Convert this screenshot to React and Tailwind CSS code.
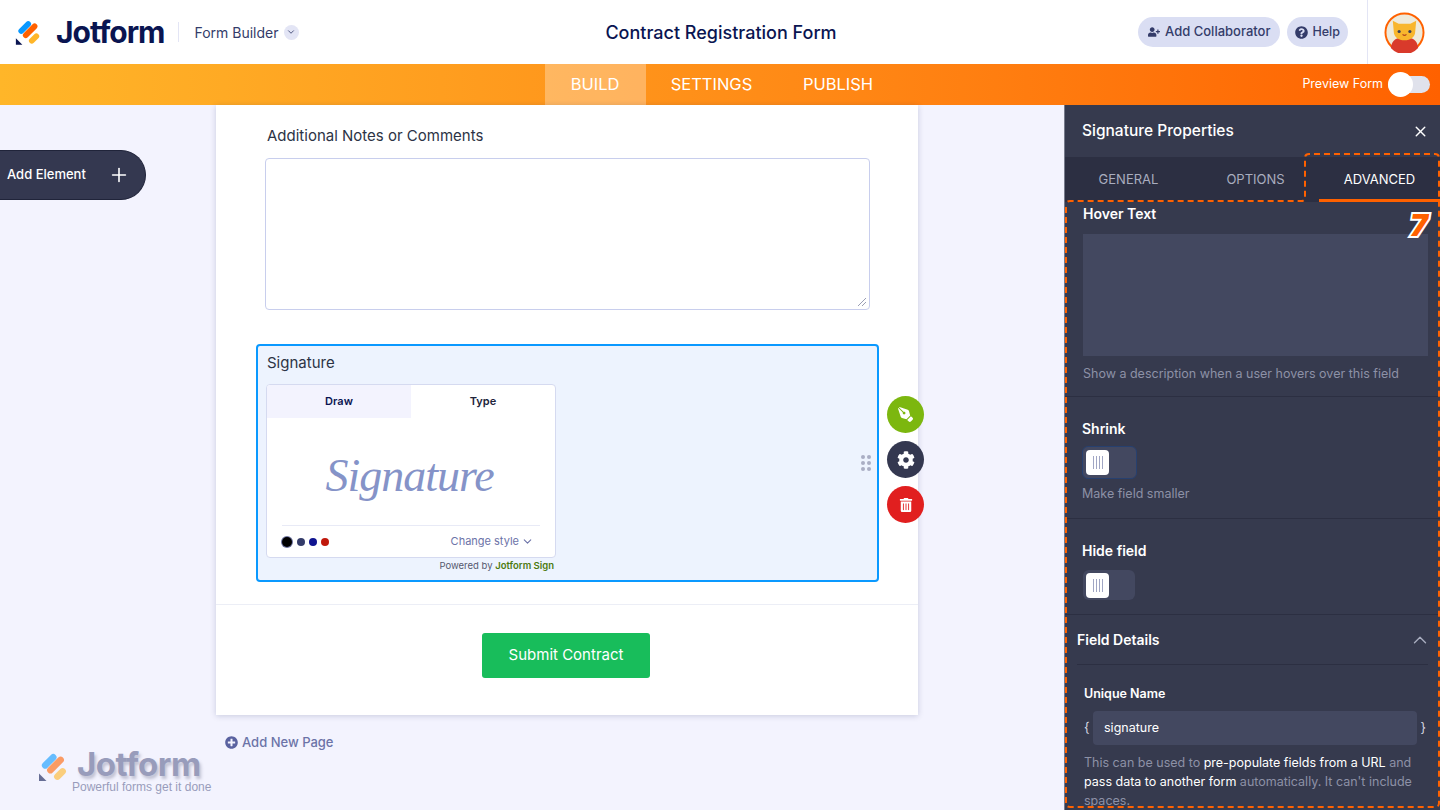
import { ChevronDown, ChevronUp, Plus, X } from 'lucide-react'
import { FaCog, FaPenNib, FaPlusCircle, FaQuestionCircle, FaTrashAlt, FaUserPlus } from 'react-icons/fa'

function LogoMark({ className }) {
  return (
    <svg viewBox="0 0 30 30" className={className}>
      <rect x="-1.5" y="-7.5" width="6.6" height="18" rx="3.3" transform="translate(11 7) rotate(45)" fill="#0a99ff" />
      <rect x="-3.3" y="-10.5" width="6.6" height="21" rx="3.3" transform="translate(17.5 13) rotate(45)" fill="#ff6100" />
      <rect x="-3.3" y="-7" width="6.6" height="14" rx="3.3" transform="translate(22 22) rotate(45)" fill="#ffb629" />
      <path d="M1 21.5 L1 29 L8.5 29 Z" fill="#0a1551" />
    </svg>
  )
}

function Avatar() {
  return (
    <svg viewBox="0 0 42 42" className="w-[41px] h-[41px]">
      <circle cx="21" cy="21" r="19.5" fill="#eeeadb" stroke="#ff6100" strokeWidth="2" />
      <path d="M7 37 C8 28 13 26 21 26 C29 26 34 28 35 37 A19 19 0 0 1 7 37 Z" fill="#d93a2b" />
      <path d="M9 9 L15 12 L27 12 L33 9 L32 20 C32 26 27 29 21 29 C15 29 10 26 10 20 Z" fill="#f8b62d" />
      <circle cx="15.5" cy="20" r="1.6" fill="#3c3f55" />
      <circle cx="26.5" cy="20" r="1.6" fill="#3c3f55" />
      <path d="M19 23 Q21 25 23 23" stroke="#b5481d" strokeWidth="1.2" fill="none" />
    </svg>
  )
}

function Toggle({ focused }) {
  return (
    <div className={`flex items-center rounded-md bg-[#434860] ${focused ? 'w-[55px] h-[33px] px-[3px] border border-[#27406f]' : 'w-[52px] h-[30px] px-[3px] ml-px'}`}>
      <div className="flex items-center justify-center gap-[2px] w-[23px] h-[25px] rounded bg-white">
        <span className="w-px h-[13px] bg-[#a0a6c4]" />
        <span className="w-px h-[13px] bg-[#a0a6c4]" />
        <span className="w-px h-[13px] bg-[#a0a6c4]" />
        <span className="w-px h-[13px] bg-[#a0a6c4]" />
      </div>
    </div>
  )
}

function SignatureWidget() {
  return (
    <div className="ml-[8px] w-[290px] h-[174px] flex flex-col rounded border border-[#d5daf0] bg-white overflow-hidden">
      <div className="flex h-[33px] text-[11px] font-semibold">
        <div className="w-[144px] flex items-center justify-center bg-[#f3f3fe] text-[#0a1551]">Draw</div>
        <div className="flex-1 flex items-center justify-center text-[#20243a]">Type</div>
      </div>
      <div className="flex-1 flex items-center justify-center">
        <span className="font-['Liberation_Serif',serif] italic text-[46px] leading-none tracking-[-1px] text-[#8593c8] mr-[3px] mt-[8px]">Signature</span>
      </div>
      <div className="mx-[15px] h-[32px] flex items-center justify-between border-t border-[#e8eaf6]">
        <div className="flex items-center gap-[4px]">
          <span className="w-[10px] h-[10px] rounded-full bg-black ring-1 ring-[#6d73a0]" />
          <span className="w-[8px] h-[8px] ml-[1px] rounded-full bg-[#343c6a]" />
          <span className="w-[8px] h-[8px] rounded-full bg-[#0f1490]" />
          <span className="w-[8px] h-[8px] rounded-full bg-[#c0180c]" />
        </div>
        <div className="flex items-center gap-[2px] mr-[6px] text-[11px] text-[#6c73a8]">
          Change style <ChevronDown size={13} />
        </div>
      </div>
    </div>
  )
}

function FormCanvas() {
  return (
    <div className="relative flex-1 bg-[#f3f3fe] pl-[216px]">
      <div className="w-[702px] h-[610px] bg-white shadow-[0_1px_6px_rgba(10,21,81,0.18)]">
        <div className="pt-[21px] pl-[51px] text-[15px] leading-5 text-[#2c3345]">Additional Notes or Comments</div>
        <div className="relative mt-[12px] ml-[49px] w-[605px] h-[152px] rounded border border-[#c8ceed] bg-white">
          <svg viewBox="0 0 8 8" className="absolute right-[3px] bottom-[3px] w-2 h-2" stroke="#9a9fb5" fill="none">
            <path d="M0 8 L8 0 M4 8 L8 4" />
          </svg>
        </div>
        <div className="mt-[34px] ml-[40px] w-[623px] h-[238px] rounded border-2 border-[#0a99ff] bg-[#edf3fe]">
          <div className="pt-[7px] pl-[9px] pb-[11px] text-[15px] leading-5 text-[#2c3345]">Signature</div>
          <SignatureWidget />
          <div className="w-[296px] pt-px text-right text-[9.5px] leading-[13px] text-[#55596e]">
            Powered by <span className="font-semibold text-[#4c7a0e]">Jotform Sign</span>
          </div>
        </div>
        <div className="mt-[22px] border-t border-[#eceef6] flex justify-center pt-[28px]">
          <div className="w-[168px] h-[45px] ml-[-2px] flex items-center justify-center rounded-[3px] bg-[#18bd5b] text-white text-[15px]">Submit Contract</div>
        </div>
      </div>
      <div className="flex items-center gap-[4px] mt-[18px] ml-[9px] text-[13px] font-medium text-[#6c73a8]">
        <FaPlusCircle size={13} className="text-[#5a62a0]" /> Add New Page
      </div>

      {/* floating bits over the canvas */}
      <div className="absolute left-0 top-[45px] w-[146px] h-[50px] flex items-center justify-between pl-[7px] pr-[15px] rounded-r-full bg-[#343850] border border-[#20243a] border-l-0 text-white">
        <span className="text-[13px] font-medium">Add Element</span>
        <Plus size={22} strokeWidth={1.75} />
      </div>
      <div className="absolute left-[861px] top-[350px] grid grid-cols-2 gap-[2px]">
        {[0, 1, 2, 3, 4, 5].map((i) => (
          <span key={i} className="w-1 h-1 rounded-full bg-[#a9aec4]" />
        ))}
      </div>
      <div className="absolute left-[887px] top-[291px] flex flex-col gap-[8px] text-white">
        <div className="w-[37px] h-[37px] rounded-full bg-[#7cb70f] flex items-center justify-center"><FaPenNib size={15} className="rotate-90" /></div>
        <div className="w-[37px] h-[37px] rounded-full bg-[#343850] flex items-center justify-center"><FaCog size={18} /></div>
        <div className="w-[37px] h-[37px] rounded-full bg-[#e11f1f] flex items-center justify-center"><FaTrashAlt size={14} /></div>
      </div>
      <div className="absolute left-[38px] top-[640px] opacity-60 flex flex-col">
        <div className="flex items-center gap-[9px]">
          <LogoMark className="w-[30px] h-[30px] mt-[6px]" />
          <span className="text-[33px] leading-[38px] font-bold tracking-[-0.5px] text-[#5c638f] [text-shadow:2px_3px_3px_rgba(60,65,100,0.45)]">Jotform</span>
        </div>
        <span className="pl-[34px] mt-[-3px] font-['Liberation_Sans',sans-serif] text-[12px] leading-[14px] text-[#5c638f]">Powerful forms get it done</span>
      </div>
    </div>
  )
}

function PropertiesPanel() {
  return (
    <div className="relative w-[376px] shrink-0 bg-[#363a4e] border-l border-[#777b8c] text-white overflow-hidden">
      <div className="h-[52px] flex items-center justify-between pl-[17px] pr-[11px]">
        <span className="text-[15.5px] font-medium">Signature Properties</span>
        <X size={17} strokeWidth={2} />
      </div>
      <div className="h-[45px] flex items-center bg-[#2c2f42] text-[13px] text-[#a9adbf]">
        <div className="w-[127px] text-center">GENERAL</div>
        <div className="w-[127px] text-center">OPTIONS</div>
        <div className="flex-1 h-full flex items-center justify-center text-white border-b-[3px] border-[#ff6100] pt-[3px]">ADVANCED</div>
      </div>

      <div className="pl-[18px] pr-[12px] pt-[2px] border-b border-[#2c2f42] h-[195px]">
        <div className="text-[14px] leading-5 font-semibold">Hover Text</div>
        <div className="mt-[10px] h-[122px] bg-[#434860]" />
        <div className="mt-[10px] text-[12.5px] leading-4 text-[#8d91a6]">Show a description when a user hovers over this field</div>
      </div>
      <div className="pl-[17px] pt-[22px] border-b border-[#2c2f42] h-[122px]">
        <div className="text-[14px] leading-5 font-semibold">Shrink</div>
        <div className="mt-[7px]"><Toggle focused /></div>
        <div className="mt-[7px] text-[12.5px] leading-4 text-[#8d91a6]">Make field smaller</div>
      </div>
      <div className="pl-[17px] pt-[22px] border-b border-[#2c2f42] h-[96px]">
        <div className="text-[14px] leading-5 font-semibold">Hide field</div>
        <div className="mt-[9px]"><Toggle /></div>
      </div>
      <div className="h-[50px] mx-[12px] flex items-center justify-between border-b border-[#2c2f42]">
        <span className="text-[14px] font-semibold">Field Details</span>
        <ChevronUp size={22} strokeWidth={1.5} className="text-[#a9adbf] mr-[-3px]" />
      </div>
      <div className="pl-[19px] pr-[14px]">
        <div className="pt-[21px] text-[12.5px] leading-4 font-semibold">Unique Name</div>
        <div className="mt-[9px] flex items-center justify-between text-[13px] text-[#d6d8e2]">
          <span>{'{'}</span>
          <div className="w-[324px] h-[34px] flex items-center px-[11px] rounded-sm bg-[#434860] text-white text-[12.5px]">signature</div>
          <span>{'}'}</span>
        </div>
        <div className="mt-[8px] text-[12.5px] leading-[19px] text-[#8d91a6]">
          This can be used to <span className="text-white">pre-populate fields from a URL</span> and <span className="text-white">pass data to another form</span> automatically. It can't include spaces.
        </div>
      </div>

      {/* annotation from the tutorial screenshot */}
      <svg viewBox="0 0 376 705" className="absolute inset-0 w-[376px] h-[705px] pointer-events-none" fill="none" stroke="#ff6100" strokeWidth="2" strokeDasharray="6 4">
        <path d="M1 102 L1 698 Q1 702 5 702 L370 702 Q374 702 374 698 L374 53 Q374 49 370 49 L244 49 Q240 49 240 53 L240 92 Q240 96 236 96 L5 96 Q1 96 1 100" />
      </svg>
      <span className="absolute left-[345px] top-[102px] text-[30px] leading-9 font-black italic text-[#ff6100] [-webkit-text-stroke:4px_white] [paint-order:stroke_fill]">7</span>
    </div>
  )
}

export default function App() {
  return (
    <div className="w-[1440px] h-[810px] flex flex-col overflow-hidden font-['Inter',sans-serif]">
      <header className="h-16 shrink-0 grid grid-cols-[1fr_auto_1fr] items-center bg-white">
        <div className="flex items-center pl-[15px]">
          <LogoMark className="w-[26px] h-[29px]" />
          <span className="ml-[15px] text-[30px] leading-none font-bold tracking-[-1px] text-[#0a1551]">Jotform</span>
          <span className="ml-[14px] w-px h-[20px] bg-[#e3e5f5]" />
          <span className="ml-[15px] text-[14px] text-[#343c6a]">Form Builder</span>
          <span className="ml-[5px] w-[15px] h-[15px] rounded-full bg-[#e3e5f5] flex items-center justify-center text-[#343c6a]"><ChevronDown size={10} /></span>
        </div>
        <div className="text-[18px] font-medium text-[#0a1551] ml-[2px]">Contract Registration Form</div>
        <div className="flex items-center justify-end h-full">
          <div className="h-[30px] flex items-center gap-[5px] px-[10px] rounded-full bg-[#dadef3] text-[13px] font-medium text-[#343c6a]">
            <FaUserPlus size={12} /> Add Collaborator
          </div>
          <div className="ml-[7px] h-[30px] flex items-center gap-[4px] px-[8px] rounded-full bg-[#dadef3] text-[12.5px] font-medium text-[#343c6a]">
            <FaQuestionCircle size={13} /> Help
          </div>
          <div className="ml-[19px] w-[73px] h-full flex items-center justify-center border-l border-[#e3e5f5]">
            <Avatar />
          </div>
        </div>
      </header>

      <nav className="h-[41px] shrink-0 grid grid-cols-[1fr_auto_1fr] items-center bg-gradient-to-r from-[#ffb629] to-[#ff6100] text-white">
        <div />
        <div className="flex h-full text-[16.5px] ml-[3px]">
          <div className="w-[101px] flex items-center justify-center bg-white/30">BUILD</div>
          <div className="w-[132px] flex items-center justify-center">SETTINGS</div>
          <div className="w-[121px] flex items-center justify-center">PUBLISH</div>
        </div>
        <div className="flex items-center justify-end pr-[10px] text-[12.5px]">
          Preview Form
          <div className="relative ml-[5px] w-[42px] h-[17px] rounded-full bg-[#e0e2ec]">
            <span className="absolute left-0 top-[-4px] w-[25px] h-[25px] rounded-full bg-white" />
          </div>
        </div>
      </nav>

      <div className="flex flex-1 min-h-0">
        <FormCanvas />
        <PropertiesPanel />
      </div>
    </div>
  )
}
